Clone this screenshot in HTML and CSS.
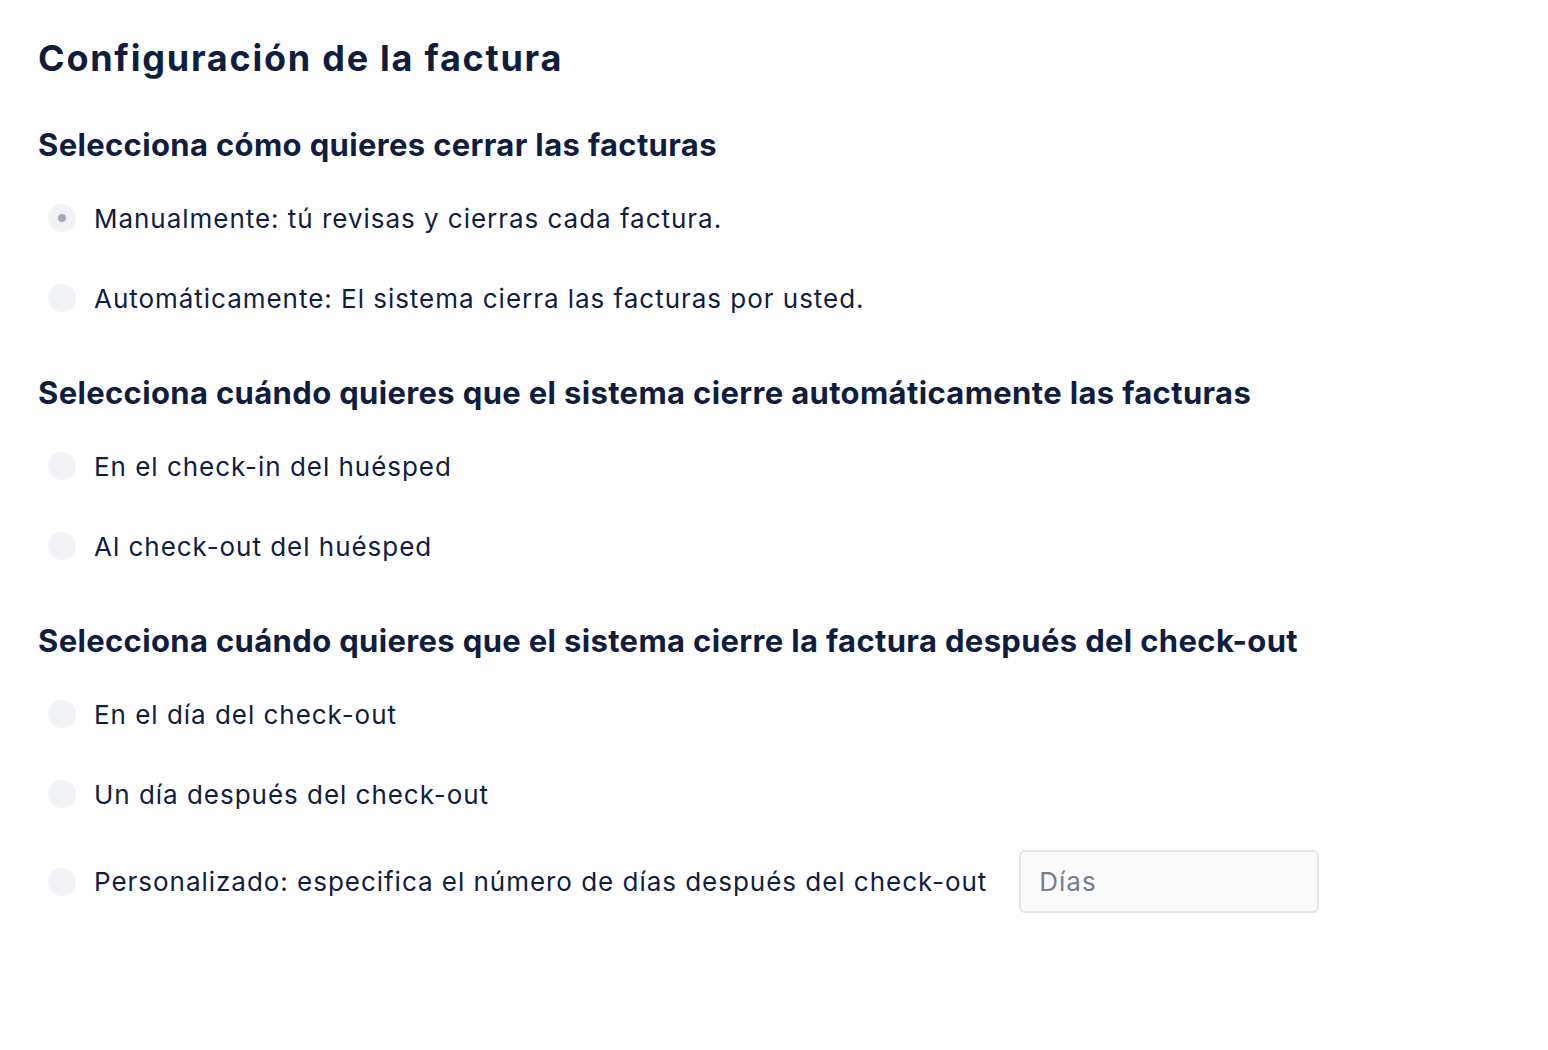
FILE: index.html
```html
<!DOCTYPE html>
<html lang="es">
<head>
  <meta charset="UTF-8">
  <meta name="viewport" content="width=device-width, initial-scale=1.0">
  <title>Configuración de la factura</title>
  <link rel="stylesheet" href="styles.css">
</head>
<body>

  <div class="container">
    <h1>Configuración de la factura</h1>

    <div class="section">
      <h2>Selecciona cómo quieres cerrar las facturas</h2>
      <label class="option">
        <input type="radio" name="close-mode" checked>
        <span class="radio"></span>
        <span>Manualmente: tú revisas y cierras cada factura.</span>
      </label>
      <label class="option">
        <input type="radio" name="close-mode">
        <span class="radio"></span>
        <span>Automáticamente: El sistema cierra las facturas por usted.</span>
      </label>
    </div>

    <div class="section">
      <h2>Selecciona cuándo quieres que el sistema cierre automáticamente las facturas</h2>
      <label class="option">
        <input type="radio" name="auto-when">
        <span class="radio"></span>
        <span>En el check-in del huésped</span>
      </label>
      <label class="option">
        <input type="radio" name="auto-when">
        <span class="radio"></span>
        <span>Al check-out del huésped</span>
      </label>
    </div>

    <div class="section">
      <h2>Selecciona cuándo quieres que el sistema cierre la factura después del check-out</h2>
      <label class="option">
        <input type="radio" name="after-checkout">
        <span class="radio"></span>
        <span>En el día del check-out</span>
      </label>
      <label class="option">
        <input type="radio" name="after-checkout">
        <span class="radio"></span>
        <span>Un día después del check-out</span>
      </label>
      <label class="option">
        <input type="radio" name="after-checkout">
        <span class="radio"></span>
        <span>Personalizado: especifica el número de días después del check-out</span>
        <input type="number" class="days-input" placeholder="Días">
      </label>
    </div>
  </div>

</body>
</html>
```

FILE: styles.css
```css
body {
  font-family: Inter, "Noto Sans", sans-serif;
  background-color: #fff;
  color: #101d3f;
  margin: 0;
}

.container {
  padding: 36px 38px;
}

h1 {
  font-size: 36px;
  line-height: 44px;
  font-weight: 700;
  letter-spacing: 1.75px;
  margin: 0 0 47px;
}

.section {
  margin-bottom: 37px;
}

h2 {
  font-size: 31px;
  line-height: 36px;
  font-weight: 700;
  letter-spacing: 0.35px;
  margin: 0 0 15px;
}

.option {
  display: flex;
  align-items: center;
  min-height: 48px;
  padding: 16px 0;
  font-size: 26px;
  letter-spacing: 0.97px;
  cursor: pointer;
}

.option input[type="radio"] {
  display: none;
}

.radio {
  width: 28px;
  height: 28px;
  border-radius: 50%;
  background-color: #f1f2f5;
  margin: 0 18px 0 10px;
  display: flex;
  align-items: center;
  justify-content: center;
  flex-shrink: 0;
}

.option input[type="radio"]:checked + .radio::after {
  content: "";
  width: 8px;
  height: 8px;
  border-radius: 50%;
  background-color: #a3a8b4;
}

.days-input {
  width: 300px;
  height: 63px;
  box-sizing: border-box;
  margin-left: 32px;
  padding: 0 18px;
  border: 2px solid #e3e4e8;
  border-radius: 6px;
  background-color: #fafafa;
  font-family: inherit;
  font-size: 26px;
  letter-spacing: 0.97px;
  color: #101d3f;
}

.days-input::placeholder {
  color: #747d90;
}

.days-input::-webkit-inner-spin-button {
  display: none;
}
```
